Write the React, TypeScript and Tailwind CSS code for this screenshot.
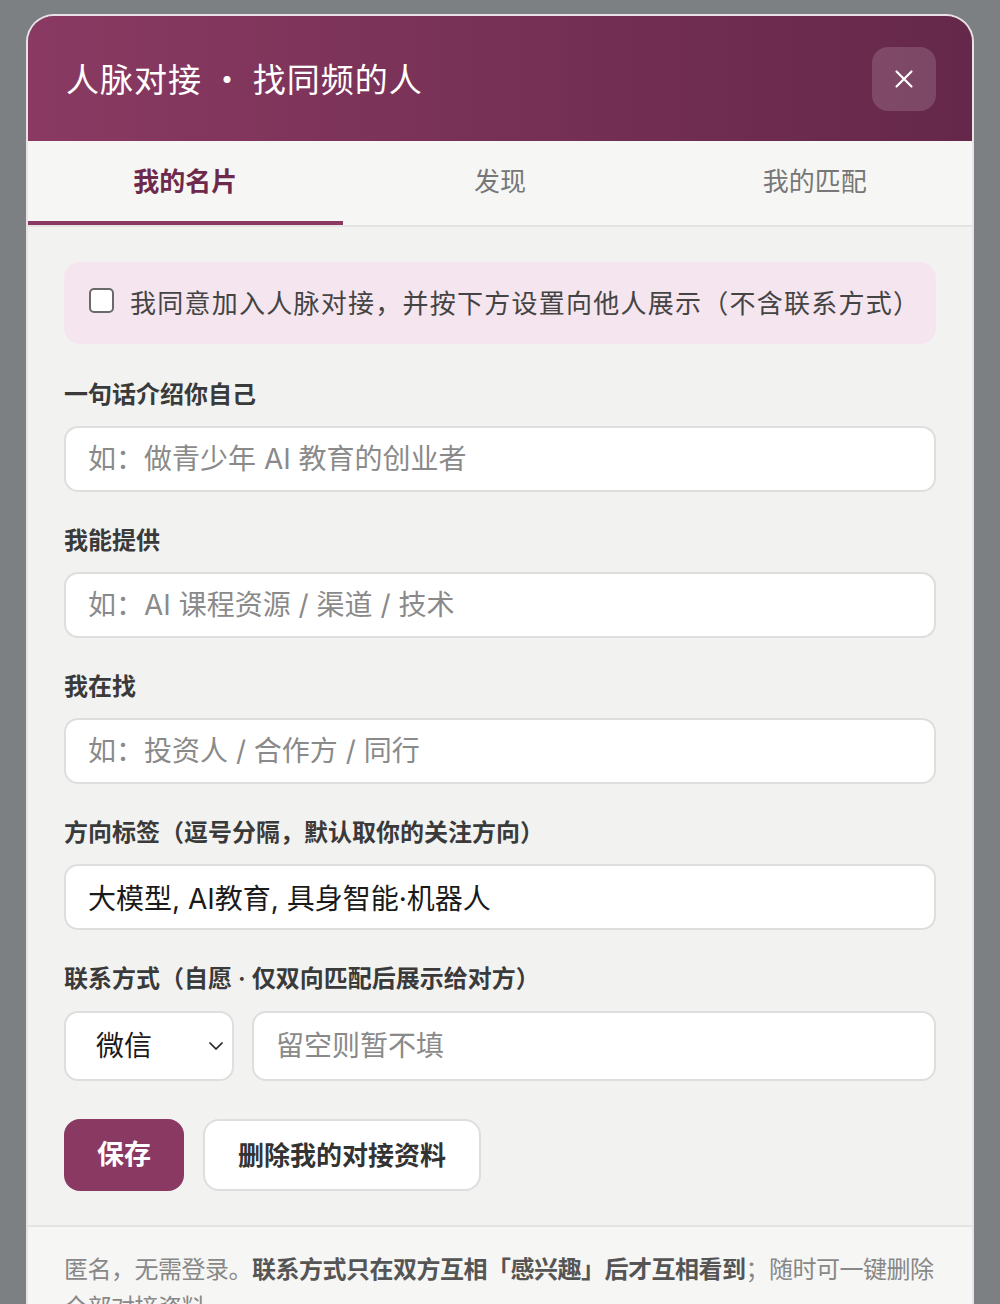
import { X, ChevronDown } from 'lucide-react';

const tabs = ['我的名片', '发现', '我的匹配'];

interface FieldProps {
  label: string;
  placeholder?: string;
  value?: string;
}

function Field({ label, placeholder, value }: FieldProps) {
  return (
    <div className="flex flex-col">
      <label className="text-[24px] leading-[30px] font-semibold text-[#3a3a3a] mb-[16px]">{label}</label>
      <input
        readOnly
        defaultValue={value}
        placeholder={placeholder}
        className="h-[66px] rounded-[14px] border-2 border-[#dedede] bg-white px-[22px] text-[28px] text-[#1a1a1a] placeholder:text-[#8a8a8a] outline-none"
      />
    </div>
  );
}

export default function App() {
  return (
    <div className="w-[1000px] h-[1304px] overflow-hidden bg-[#7c8083] px-[26px] pt-[14px] font-['Inter','Noto_Sans_CJK_SC',sans-serif]">
      <div className="rounded-t-[28px] border-2 border-b-0 border-[#e9e1e5] overflow-hidden">
        {/* Header */}
        <div className="h-[125px] flex items-center justify-between pl-[38px] pr-[36px] bg-gradient-to-r from-[#8a3a62] to-[#65284a]">
          <h1 className="font-['Noto_Sans_CJK_SC',sans-serif] text-[33px] text-white font-normal tracking-[1px]">
            人脉对接 · 找同频的人
          </h1>
          <button className="w-[64px] h-[64px] rounded-[16px] bg-white/15 flex items-center justify-center text-white">
            <X size={30} strokeWidth={1.75} />
          </button>
        </div>

        {/* Tabs */}
        <div className="h-[86px] grid grid-cols-3 bg-[#f6f6f4] border-b-2 border-[#e4e4e4]">
          {tabs.map((t, i) => (
            <button
              key={t}
              className={`h-full flex items-center justify-center border-b-4 text-[26px] ${
                i === 0 ? 'border-[#8a3a62] text-[#6e2a4c] font-semibold' : 'border-transparent text-[#777777]'
              }`}
            >
              {t}
            </button>
          ))}
        </div>

        {/* Body */}
        <div className="bg-[#f2f2f1] px-[36px] pt-[35px] pb-[34px] flex flex-col">
          <div className="h-[82px] rounded-[16px] bg-[#f5e5ef] flex items-center pl-[25px] gap-[16px] mb-[36px]">
            <span className="w-[25px] h-[25px] rounded-[5px] border-2 border-[#6a6a6a] bg-white shrink-0 -mt-[6px]" />
            <span className="text-[26px] text-[#444444] tracking-[1.25px]">
              我同意加入人脉对接，并按下方设置向他人展示（不含联系方式）
            </span>
          </div>

          <div className="flex flex-col gap-[34px]">
            <Field label="一句话介绍你自己" placeholder="如：做青少年 AI 教育的创业者" />
            <Field label="我能提供" placeholder="如：AI 课程资源 / 渠道 / 技术" />
            <Field label="我在找" placeholder="如：投资人 / 合作方 / 同行" />
            <Field label="方向标签（逗号分隔，默认取你的关注方向）" value="大模型, AI教育, 具身智能·机器人" />

            <div className="flex flex-col">
              <label className="text-[24px] leading-[30px] font-semibold text-[#3a3a3a] mb-[17px]">
                联系方式（自愿 · 仅双向匹配后展示给对方）
              </label>
              <div className="flex gap-[18px]">
                <div className="w-[170px] h-[70px] rounded-[14px] border-2 border-[#dedede] bg-white flex items-center justify-between pl-[30px] pr-[4px]">
                  <span className="text-[28px] text-[#1a1a1a]">微信</span>
                  <ChevronDown size={24} strokeWidth={1.75} className="text-[#222222]" />
                </div>
                <input
                  readOnly
                  placeholder="留空则暂不填"
                  className="flex-1 h-[70px] rounded-[14px] border-2 border-[#dedede] bg-white px-[22px] text-[28px] placeholder:text-[#8a8a8a] outline-none"
                />
              </div>
            </div>
          </div>

          <div className="flex gap-[19px] mt-[38px]">
            <button className="h-[72px] px-[33px] rounded-[16px] bg-[#8a3a62] text-white text-[27px] font-semibold">
              保存
            </button>
            <button className="h-[72px] px-[33px] rounded-[16px] border-2 border-[#dedede] bg-white text-[#333333] text-[26px] font-semibold">
              删除我的对接资料
            </button>
          </div>
        </div>

        {/* Footer */}
        <div className="bg-[#f6f6f4] border-t-2 border-[#e4e4e4] px-[36px] pt-[24px] pb-[24px]">
          <p className="text-[24px] leading-[38px] text-[#888888] tracking-[-0.5px]">
            匿名，无需登录。
            <span className="font-semibold text-[#555555]">联系方式只在双方互相「感兴趣」后才互相看到</span>
            ；随时可一键删除全部对接资料
          </p>
        </div>
      </div>
    </div>
  );
}
